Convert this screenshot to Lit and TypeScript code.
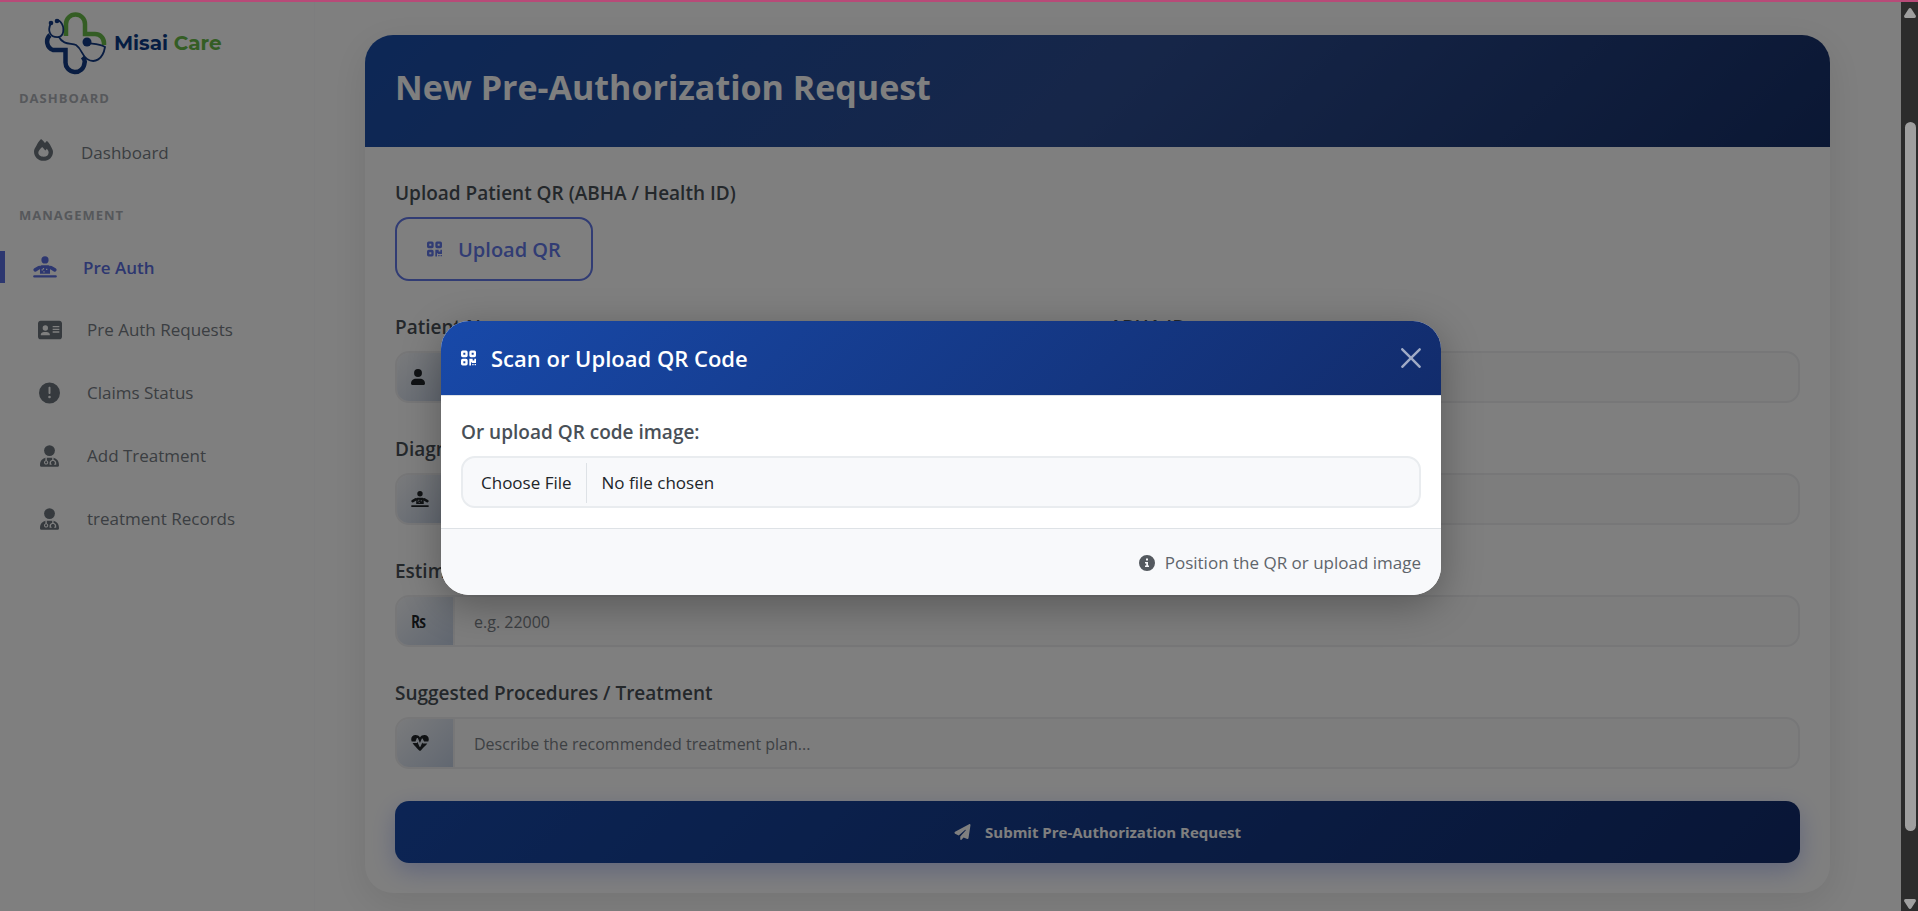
import { LitElement, html, css, svg } from "lit";
import { customElement } from "lit/decorators.js";

const qr = svg`<path fill-rule="evenodd" d="M0 2.500A2 2 0 0 1 2 .5h4a2 2 0 0 1 2 2v4a2 2 0 0 1-2 2H2a2 2 0 0 1-2-2zM2.800 3.300v2.400h2.400V3.300zM0 12.500a2 2 0 0 1 2-2h4a2 2 0 0 1 2 2v4a2 2 0 0 1-2 2H2a2 2 0 0 1-2-2zM2.800 13.300v2.400h2.400v-2.400zM10 2.500a2 2 0 0 1 2-2h4a2 2 0 0 1 2 2v4a2 2 0 0 1-2 2h-4a2 2 0 0 1-2-2zM12.800 3.300v2.400h2.400V3.300zM10 10.500h4v2h2v-2h2v5h-5v-1h-1v4h-2zM13.500 16.700h1.600v1.600h-1.600zM16.300 16.700h1.600v1.600h-1.600z"/>`;
const doctor = svg`<circle cx="224" cy="128" r="128"/><path fill-rule="evenodd" d="M160 300h128c95 0 160 70 160 172 0 22-18 40-40 40H40c-22 0-40-18-40-40 0-102 65-172 160-172zM128 300v60a50 50 0 1 0 32 0v-60zM144 382a26 26 0 1 1 0 52 26 26 0 1 1 0-52zM288 300v48c-36 6-62 32-62 66v46h48v-24h-16v-22c0-22 20-38 46-38s46 16 46 38v22h-16v24h48v-46c0-34-26-60-62-66v-48z"/>`;
const desk = svg`<circle cx="320" cy="96" r="96"/><path fill-rule="evenodd" d="M226 238h188q40 0 40 40v184H186V278q0-40 40-40zM262 310v34h-32v32h32v-26h34v-40zM382 330h-34v32h34zM310 400h-34v30h34z"/><path d="M166 300L60 362M474 300l106 62" stroke="currentColor" stroke-width="96" stroke-linecap="round"/><rect x="4" y="506" width="632" height="60" rx="30"/>`;

const icons: Record<string, { box: string; body: unknown }> = {
  qr: { box: "0 0 18 19", body: qr },
  fire: {
    box: "0 0 448 512",
    body: svg`<path fill-rule="evenodd" d="M160 5c4-5 11-6 16-1 30 27 58 57 82 89 11-14 24-31 37-44 5-5 12-5 17 0 34 32 64 75 84 116 20 42 52 84 52 130 0 130-98 217-224 217S0 412 0 289c0-49 28-88 56-136C82 105 117 45 160 5zm65 411c73 0 120-46 120-104 0-32-20-58-42-86-12 18-24 32-37 43-20-26-46-56-72-84-42 44-92 84-92 132 0 60 54 99 123 99z"/>`,
  },
  desk: { box: "0 0 640 570", body: desk },
  card: {
    box: "0 0 576 448",
    body: svg`<path fill-rule="evenodd" d="M64 0h448c35 0 64 29 64 64v320c0 35-29 64-64 64H64c-35 0-64-29-64-64V64C0 29 29 0 64 0zm16 352h192c9 0 16-7 14-16-5-38-38-64-78-64h-64c-40 0-73 26-78 64-1 9 5 16 14 16zm96-240a64 64 0 1 0 0 128 64 64 0 1 0 0-128zm176 16v32h160v-32zm0 64v32h160v-32zm0 64v32h160v-32z"/>`,
  },
  alert: {
    box: "0 0 512 512",
    body: svg`<path fill-rule="evenodd" d="M256 0a256 256 0 1 0 0 512 256 256 0 1 0 0-512zm-24 128c0-13 11-24 24-24s24 11 24 24v128c0 13-11 24-24 24s-24-11-24-24zm24 192a32 32 0 1 1 0 64 32 32 0 1 1 0-64z"/>`,
  },
  doctor: { box: "0 0 448 512", body: doctor },
  user: {
    box: "0 0 448 512",
    body: svg`<circle cx="224" cy="128" r="126"/><path d="M0 464c0-90 70-152 160-152h128c90 0 160 62 160 152 0 28-20 48-48 48H48c-28 0-48-20-48-48z"/>`,
  },
  heart: {
    box: "0 0 512 450",
    body: svg`<path d="M20 180C-20 90 30 0 130 0c52 0 96 24 126 66C286 24 330 0 382 0c100 0 150 90 110 180H372l-36-72c-7-14-26-13-32 1l-50 118-58-134c-6-14-27-15-32 0l-36 87z"/><path d="M46 222h120l14-33 60 138c6 14 26 14 32 0l50-116 10 22c3 6 8 9 14 9h118c-14 22-34 42-184 193-14 14-34 14-48 0C88 286 62 250 46 222z"/>`,
  },
  info: {
    box: "0 0 512 512",
    body: svg`<path fill-rule="evenodd" d="M256 0a256 256 0 1 0 0 512 256 256 0 1 0 0-512zm-64 224h96v112h32v48H192v-48h40v-64h-40zm32-112h64v64h-64z"/>`,
  },
  plane: {
    box: "0 0 512 512",
    body: svg`<path d="M498 6c10 7 15 18 13 30l-64 416c-2 17-20 30-38 26l-118-49-68 74c-14 15-39 6-39-15v-84c0-6 2-11 6-15l166-181c12-14-6-32-20-20L134 367 20 310c-26-12-27-48-2-62L466 4c10-6 22-5 32 2z"/>`,
  },
  close: {
    box: "0 0 16 16",
    body: svg`<path d="M.3.3a1 1 0 0 1 1.400 0L8 6.600 14.300.3a1 1 0 0 1 1.400 1.400L9.400 8l6.300 6.300a1 1 0 0 1-1.400 1.400L8 9.400l-6.300 6.300a1 1 0 0 1-1.400-1.400L6.600 8 .3 1.700a1 1 0 0 1 0-1.400z"/>`,
  },
};

const icon = (name: string, cls: string, align = "xMidYMid") =>
  html`<svg class="ico ${cls}" viewBox=${icons[name].box} preserveAspectRatio=${align} fill="currentColor" aria-hidden="true">${icons[name].body}</svg>`;

@customElement("side-nav")
export class SideNav extends LitElement {
  static styles = css`
    :host { display: block; border-right: 1px solid #fafafc; color: #7a8086; }
    .logo { display: flex; align-items: center; gap: 7px; padding: 9px 0 0 44px; text-decoration: none; }
    .mark { width: 63px; height: 64px; }
    .brand { font: 700 20px/28px Montserrat, "Open Sans", sans-serif; color: #0b3a86; }
    .brand b { font-weight: 700; color: #68bb48; }
    .group { margin: 0; padding-left: 19px; font-size: 13px; line-height: 18px; font-weight: 700; letter-spacing: 1px; text-transform: uppercase; color: #adb1b7; }
    .first { padding-top: 14px; }
    .second { padding-top: 24px; }
    ul { list-style: none; margin: 0; padding: 0; }
    .top { padding-top: 16px; }
    .list { padding-top: 12px; }
    a.item { display: flex; align-items: center; height: 63px; padding-left: 37px; color: #767c84; font-size: 17px; text-decoration: none; }
    .slot { display: flex; justify-content: center; width: 25px; margin-right: 25px; color: #6c757d; }
    .dash .slot { width: 20px; margin: 0 28px 6px -4px; }
    a.dash { height: 59px; }
    a.active { height: 62px; padding-left: 33px; color: #5b6ee0; font-weight: 600; }
    .active .slot { color: #5b6ee0; width: 24px; margin-right: 26px; }
    .active::before { content: ""; width: 5px; height: 32px; margin: 0 28px 0 -33px; background: #5b6ee0; }
    .i18 { width: 19px; height: 22px; }
    .i24 { width: 24px; height: 22px; }
    .i21 { width: 21px; height: 22px; }
  `;
  render() {
    const rows = [
      ["card", "i24", "Pre Auth Requests"],
      ["alert", "i21", "Claims Status"],
      ["doctor", "i18", "Add Treatment"],
      ["doctor", "i18", "treatment Records"],
    ];
    return html`
      <a class="logo" href="#home">
        <svg class="mark" viewBox="0 0 63 64" fill="none" aria-hidden="true">
          <path d="M22 25V13a9.500 9.500 0 0 1 19 0v10h10a9 9 0 0 1 9 9v2" stroke="#68bb48" stroke-width="4.500"/>
          <path d="M6 24a9 9 0 0 0 3 15h12.500v12a9.500 9.500 0 0 0 19 1q1-3-2-6" stroke="#123a84" stroke-width="4.500"/>
          <path d="M7 12c-4 8-1 15 8 14 6-2 6-13-1-17M15 26c4 8 12 6 17 8 6 4 6 11 11 14 8 5 16 0 18-12-6-4-12-3-18-4" stroke="#123a84" stroke-width="1.800"/>
          <circle cx="43" cy="31" r="4.500" fill="#123a84"/><circle cx="7" cy="12" r="2.300" fill="#123a84"/><circle cx="13" cy="10" r="2.300" fill="#123a84"/>
        </svg>
        <span class="brand">Misai <b>Care</b></span>
      </a>
      <h2 class="group first">Dashboard</h2>
      <ul class="top"><li><a class="item dash" href="#dashboard"><span class="slot">${icon("fire", "i18")}</span>Dashboard</a></li></ul>
      <h2 class="group second">Management</h2>
      <ul class="list">
        <li><a class="item active" href="#pre-auth"><span class="slot">${icon("desk", "i24")}</span>Pre Auth</a></li>
        ${rows.map(([i, c, t]) => html`<li><a class="item" href="#"><span class="slot">${icon(i, c)}</span>${t}</a></li>`)}
      </ul>`;
  }
}

@customElement("auth-form")
export class AuthForm extends LitElement {
  static styles = css`
    :host { display: block; border-radius: 28px; background: #fff; box-shadow: 0 10px 40px rgba(0, 0, 0, 0.1); overflow: hidden; }
    * { box-sizing: border-box; }
    header { padding: 28px 30px 36px; background: linear-gradient(135deg, #1a4fac, #2d4d92 50%, #162f68); }
    h1 { margin: 0; font-size: 34px; line-height: 48px; font-weight: 700; color: #fff; }
    form { display: grid; grid-template-columns: 1fr 1fr; column-gap: 24px; row-gap: 32px; padding: 32px 30px 30px; }
    .field { display: grid; gap: 10px; }
    .wide { grid-column: 1 / -1; }
    label, .label { font-size: 19px; line-height: 28px; font-weight: 600; color: #495057; }
    .upload { display: flex; align-items: center; gap: 16px; justify-self: start; height: 64px; padding: 0 30px; border: 2px solid #6278e8; border-radius: 14px; background: none; color: #6278e8; font-family: inherit; font-size: 20px; font-weight: 600; }
    .qr { width: 15px; height: 16px; }
    .group { display: flex; height: 52px; border: 2px solid #eeeff1; border-radius: 14px; overflow: hidden; background: #fafafb; }
    .badge { display: flex; align-items: center; width: 56px; padding-left: 14px; background: linear-gradient(135deg, #f5f7fa, #c3cfe2); color: #212529; font-size: 17px; font-weight: 600; }
    .badge .ico { height: 16px; width: 18px; }
    input { flex: 1; min-width: 0; border: 0; border-left: 2px solid #eeeff1; padding: 2px 19px 0; background: none; font: inherit; font-size: 16px; color: #212529; }
    input::placeholder { color: #7b8187; opacity: 1; }
    .submit { grid-column: 1 / -1; display: flex; align-items: center; justify-content: center; gap: 14px; height: 62px; border: 0; border-radius: 14px; background: linear-gradient(135deg, #1849a9, #122c6c); box-shadow: 0 8px 25px rgba(102, 126, 234, 0.4); color: #fff; font-family: inherit; font-size: 15px; font-weight: 700; }
    .plane { width: 17px; height: 16px; }
  `;
  field(id: string, label: string, badge: unknown, hint: string, wide = true) {
    return html`<div class="field ${wide ? "wide" : ""}">
      <label for=${id}>${label}</label>
      <div class="group"><span class="badge">${badge}</span><input id=${id} placeholder=${hint} /></div>
    </div>`;
  }
  render() {
    return html`
      <header><h1>New Pre-Authorization Request</h1></header>
      <form>
        <div class="field wide">
          <span class="label" id="qr">Upload Patient QR (ABHA / Health ID)</span>
          <button class="upload" type="button" aria-describedby="qr">${icon("qr", "qr")}Upload QR</button>
        </div>
        ${this.field("name", "Patient Name", icon("user", "", "xMinYMid"), "", false)}
        ${this.field("abha", "ABHA ID", icon("card", "", "xMinYMid"), "", false)}
        ${this.field("diag", "Diagnosis", icon("desk", "", "xMinYMid"), "")}
        ${this.field("cost", "Estimated Cost", "₨", "e.g. 22000")}
        ${this.field("plan", "Suggested Procedures / Treatment", icon("heart", "", "xMinYMid"), "Describe the recommended treatment plan...")}
        <button class="submit" type="button">${icon("plane", "plane")}Submit Pre-Authorization Request</button>
      </form>`;
  }
}

@customElement("qr-dialog")
export class QrDialog extends LitElement {
  static styles = css`
    :host { display: block; width: 1000px; max-width: 90%; border-radius: 28px; overflow: hidden; background: #fff; box-shadow: 0 10px 40px rgba(0, 0, 0, 0.3); }
    * { box-sizing: border-box; }
    header { display: flex; align-items: center; padding: 20px; min-height: 75px; border-bottom: 1px solid #dee2e6; background: linear-gradient(135deg, #1849a9, #122c6c); background-clip: padding-box; color: #fff; }
    h2 { flex: 1; margin: 0 0 0 15px; font-size: 22px; line-height: 32px; font-weight: 600; }
    .qr { width: 15px; height: 16px; }
    .close { display: flex; padding: 0; border: 0; background: none; color: #fff; opacity: 0.6; }
    .x { width: 20px; height: 20px; }
    .body { display: grid; gap: 10px; padding: 22px 20px 20px; }
    label { font-size: 19px; line-height: 28px; font-weight: 600; color: #495057; }
    input { width: 100%; height: 52px; padding: 5px 0; border: 2px solid #e9ecef; border-radius: 14px; background: #f8f9fb; font: inherit; font-size: 17px; line-height: 38px; color: #212529; }
    input::file-selector-button { height: 40px; margin: 0 15px 0 0; padding: 0 14px 0 18px; border: 0; border-right: 1px solid #dee2e6; background: none; font: inherit; color: #212529; }
    footer { display: flex; align-items: center; justify-content: flex-end; gap: 10px; height: 67px; padding: 2px 20px 0; border-top: 1px solid #dee2e6; background: #f8f9fb; color: #5f656b; font-size: 17px; }
    .i { width: 16px; height: 16px; color: #54595f; }
  `;
  render() {
    return html`
      <header>${icon("qr", "qr")}<h2>Scan or Upload QR Code</h2><button class="close" aria-label="Close">${icon("close", "x")}</button></header>
      <div class="body"><label for="file">Or upload QR code image:</label><input id="file" type="file" /></div>
      <footer>${icon("info", "i")}<span>Position the QR or upload image</span></footer>`;
  }
}

@customElement("app-root")
export class AppRoot extends LitElement {
  static styles = css`
    :host { display: grid; grid-template-rows: 2px 1fr; height: 100vh; overflow: hidden; font-family: "Open Sans", "Noto Sans", sans-serif; font-size: 16px; background: #fff; }
    .strip { background: #b84a78; }
    .frame { display: grid; grid-template-columns: 1fr 17px; min-height: 0; }
    .page { position: relative; display: grid; grid-template-columns: 315px 1fr; min-height: 0; overflow: hidden; }
    main { padding: 33px 71px 0 50px; }
    .backdrop { position: absolute; inset: 0; display: flex; align-items: center; justify-content: center; padding: 2px 19px 0 0; background: rgba(0, 0, 0, 0.5); }
    .track { display: flex; flex-direction: column; align-items: center; padding: 6px 0 2px; background: #2c2c2c; }
    .arrow { width: 12px; height: 10px; fill: #9f9f9f; }
    .thumb { width: 11px; flex: 1; margin: 104px 0 68px 2px; border-radius: 6px; background: #9f9f9f; }
  `;
  render() {
    return html`
      <div class="strip"></div>
      <div class="frame">
        <div class="page">
          <side-nav></side-nav>
          <main><auth-form></auth-form></main>
          <div class="backdrop"><qr-dialog role="dialog" aria-label="Scan or Upload QR Code"></qr-dialog></div>
        </div>
        <div class="track">
          <svg class="arrow" viewBox="0 0 12 10"><path d="M6 0q1 0 1.500 1L12 8q0 2-1.500 2h-9Q0 10 0 8L4.500 1Q5 0 6 0z"/></svg>
          <div class="thumb"></div>
          <svg class="arrow" viewBox="0 0 12 10"><path d="M6 10q1 0 1.500-1L12 2q0-2-1.500-2h-9Q0 0 0 2l4.500 7q.5 1 1.500 1z"/></svg>
        </div>
      </div>`;
  }
}
